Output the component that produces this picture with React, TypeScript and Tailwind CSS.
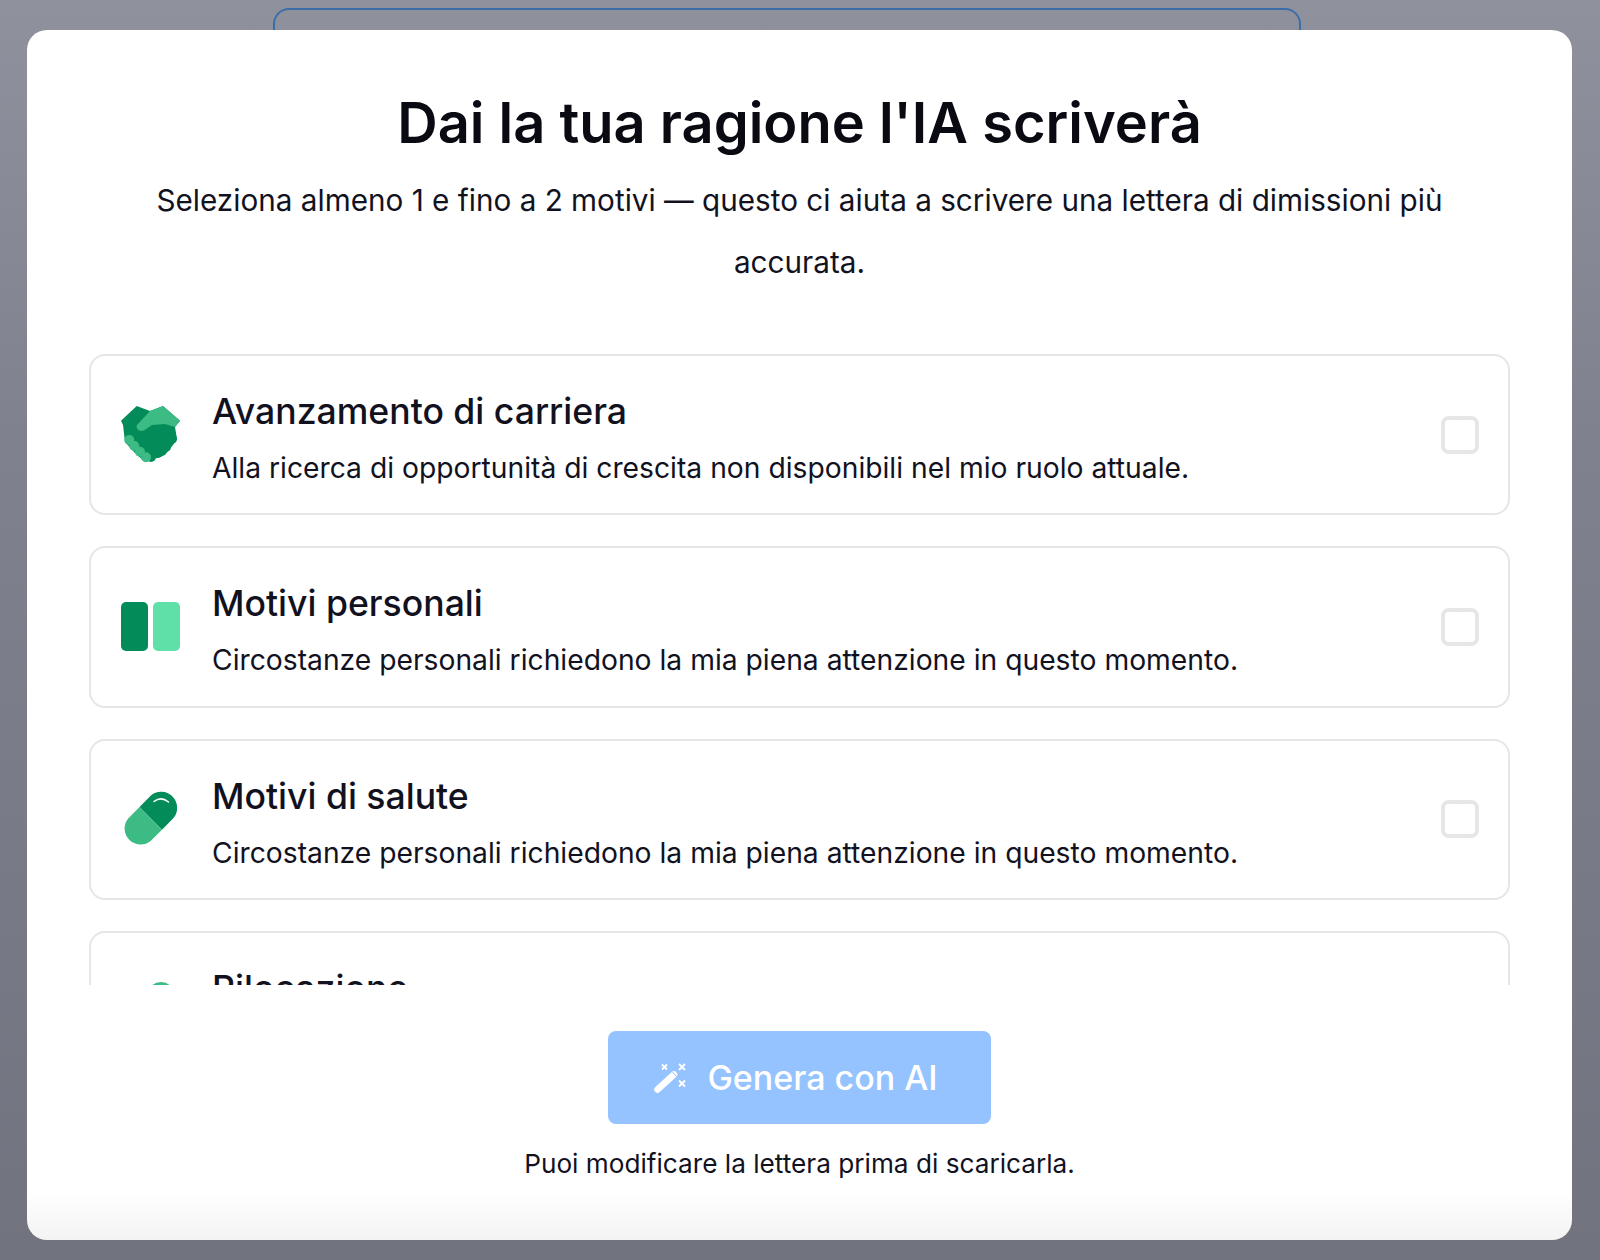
const REASONS = [
  {
    title: 'Avanzamento di carriera',
    text: 'Alla ricerca di opportunità di crescita non disponibili nel mio ruolo attuale.',
    icon: <HandshakeIcon />,
  },
  {
    title: 'Motivi personali',
    text: 'Circostanze personali richiedono la mia piena attenzione in questo momento.',
    icon: <BlocksIcon />,
  },
  {
    title: 'Motivi di salute',
    text: 'Circostanze personali richiedono la mia piena attenzione in questo momento.',
    icon: <PillIcon />,
  },
  {
    // only the top of this row shows above the scroll edge
    title: 'Rilocazione',
    text: '',
    icon: <PinIcon />,
  },
];

function HandshakeIcon() {
  return (
    <svg width="60" height="60" viewBox="0 0 60 60">
      <path d="M1 15.700 16.700 1 30 6 43 1 60 15.700 55 22 57 34 53 40 45 50 37 53 25 57 15 48 5 37 3 20Z" fill="#038c5a" />
      <circle cx="52" cy="34" r="5" fill="#038c5a" />
      <circle cx="46" cy="42" r="5" fill="#038c5a" />
      <circle cx="38" cy="48" r="5" fill="#038c5a" />
      <circle cx="31" cy="52" r="5" fill="#038c5a" />
      <circle cx="9.300" cy="35" r="5" fill="#3cbb84" />
      <circle cx="14.300" cy="41" r="5" fill="#3cbb84" />
      <circle cx="20" cy="46.700" r="5" fill="#3cbb84" />
      <circle cx="26" cy="52.300" r="5" fill="#3cbb84" />
      <path d="M17 20 30 6 43 1 60 15.700 55 22 45 19 32 20 24 25.500Q19 27 17 23.500 16 21.500 17 20Z" fill="#3cbb84" />
    </svg>
  );
}

function BlocksIcon() {
  return (
    <svg width="60" height="60" viewBox="0 0 60 60">
      <rect x="1" y="5" width="27" height="49" rx="5" fill="#038c5a" />
      <rect x="33" y="5" width="27" height="49" rx="5" fill="#5ee0a8" />
    </svg>
  );
}

function PillIcon() {
  return (
    <svg width="60" height="60" viewBox="0 0 60 60">
      <path d="M19.500 18 30.400 7A16 16 0 0 1 53 29.600L42 40.700Z" fill="#038c5a" />
      <path d="M19.500 18 8.200 29.400A16 16 0 0 0 30.600 52L42 40.700Z" fill="#3cbb84" />
      <path d="M34 12.500Q41 7 48.500 13" fill="none" stroke="#fff" strokeWidth="1.500" strokeLinecap="round" />
    </svg>
  );
}

function PinIcon() {
  return (
    <svg width="60" height="60" viewBox="0 0 60 60">
      <circle cx="41" cy="15" r="14" fill="#3cbb84" />
    </svg>
  );
}

function WandIcon() {
  return (
    <svg width="32" height="32" viewBox="0 0 32 32" className="shrink-0">
      <path d="M3.500 27.500 20 12.500" stroke="#fff" strokeWidth="6.500" strokeLinecap="round" fill="none" />
      <path d="M18.500 10 22.500 14.500" stroke="#94c3ff" strokeWidth="1" fill="none" />
      <path d="M8 2.500 13 7.500M13 2.500 8 7.500M25 2 31 8M31 2 25 8M25 18.500 31 24.500M31 18.500 25 24.500" stroke="#fff" strokeWidth="1.800" fill="none" />
    </svg>
  );
}

function ReasonCard({ title, text, icon }: { title: string; text: string; icon: React.ReactNode }) {
  return (
    <div className="flex h-[161.25px] shrink-0 items-center rounded-[16px] border-2 border-[#e6e6e6] bg-white pl-[29px] pr-[29px]">
      <div className="shrink-0">{icon}</div>
      <div className="ml-[32px] flex-1 pt-[8px]">
        <div className="text-[35.6px] font-medium leading-[46px] text-[#12121f]">{title}</div>
        <div className="mt-[13px] min-h-[40px] text-[28.25px] leading-[40px] text-[#12121f]">{text}</div>
      </div>
      <div className="size-[38px] shrink-0 rounded-[8px] border-[4px] border-[#e6e6e6] bg-white" />
    </div>
  );
}

export default function App() {
  return (
    <div className="h-[1260px] overflow-hidden bg-gradient-to-b from-[#8f919d] via-[#7f828e] via-[35%] to-[#71747f] pt-[8px] font-['Inter',sans-serif]">
      <div className="ml-[273px] h-[22px] w-[1028px] rounded-t-[16px] border-x-2 border-t-2 border-[#3b6ea8]" />
      <div className="ml-[27px] mr-[28px] flex h-[1210px] flex-col rounded-[20px] bg-gradient-to-b from-white from-[96%] to-[#f3f3f3] px-[62px]">
        <h1 className="mt-[59px] text-center text-[56px] font-semibold leading-[68px] text-[#0a0a12]">
          Dai la tua ragione l'IA scriverà
        </h1>
        <p className="mx-auto mt-[12px] w-[1300px] text-center text-[29.7px] leading-[62px] text-[#12121f]">
          Seleziona almeno 1 e fino a 2 motivi — questo ci aiuta a scrivere una lettera di dimissioni più accurata.
        </p>
        <div className="mt-[61px] flex h-[631px] flex-col gap-[31px] overflow-hidden">
          {REASONS.map((r) => (
            <ReasonCard key={r.title} title={r.title} text={r.text} icon={r.icon} />
          ))}
        </div>
        <button className="mx-auto mt-[46px] flex h-[93px] w-[383px] items-center justify-center gap-[21px] rounded-[8px] bg-[#94c3ff] pr-[7px] text-[34px] font-medium text-white">
          <WandIcon />
          Genera con AI
        </button>
        <p className="mt-[20px] text-center text-[26.2px] leading-[40px] text-[#12121f]">
          Puoi modificare la lettera prima di scaricarla.
        </p>
      </div>
    </div>
  );
}
